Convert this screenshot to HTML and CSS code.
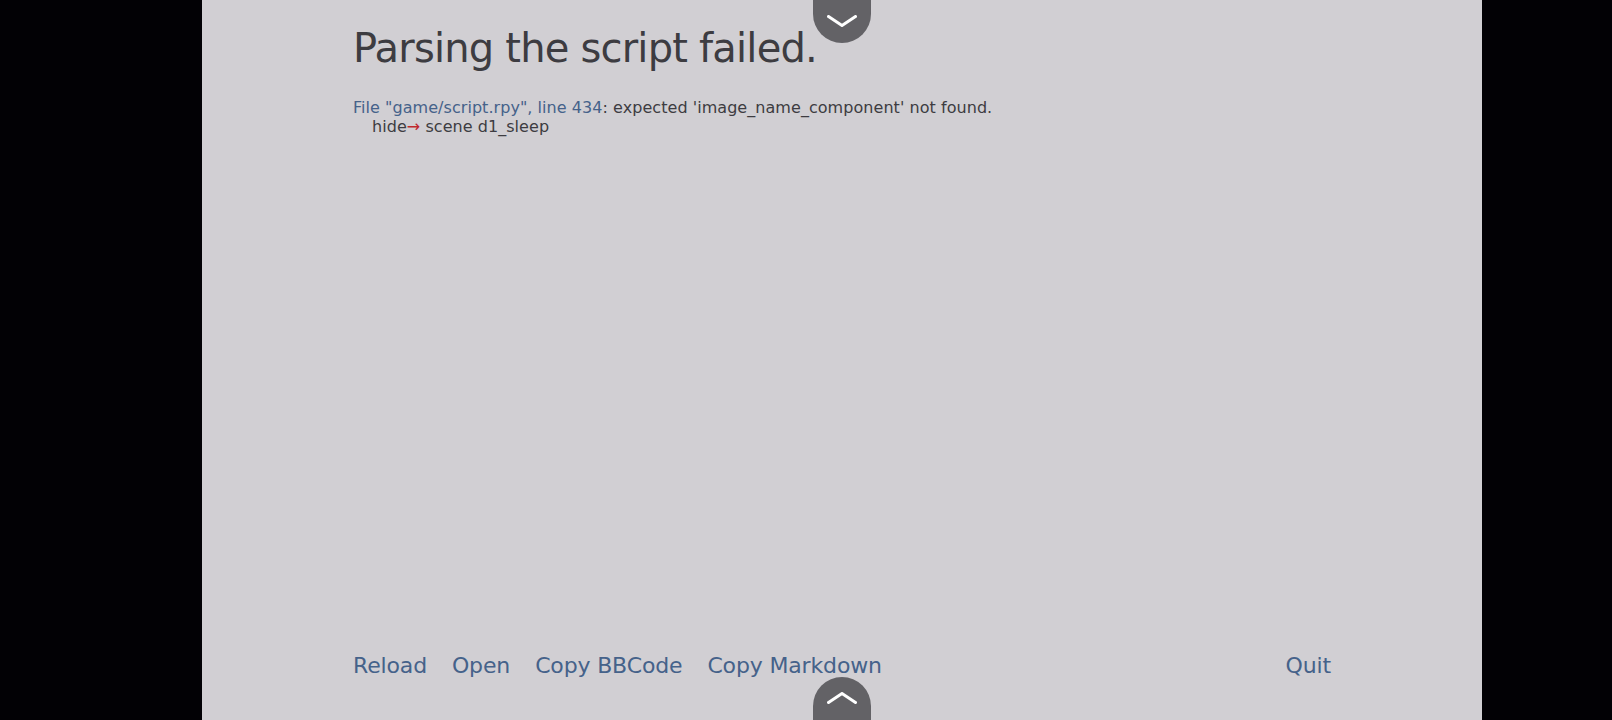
FILE: index.html
```html
<!DOCTYPE html>
<html lang="en">
  <head>
    <meta charset="utf-8" />
    <meta name="viewport" content="width=device-width, initial-scale=1" />
    <link rel="stylesheet" href="styles.css">
    <title>Parsing the script failed.</title>
  </head>
  <body>
    <main class="stage">
      <a class="scroll-tab scroll-tab--top" href="#">
        <svg viewBox="0 0 30 12" width="30" height="12">
          <polyline points="1.5,1.5 15,10.5 28.5,1.5" />
        </svg>
      </a>

      <section class="report">
        <h1>Parsing the script failed.</h1>
        <div class="trace">
          <p><span class="loc">File "game/script.rpy", line 434</span><span>: expected 'image_name_component' not found.</span></p>
          <p class="code"><span>hide</span><span class="mark">→</span><span>&nbsp;scene d1_sleep</span></p>
        </div>
      </section>

      <nav class="actions">
        <a href="#">Reload</a>
        <a href="#">Open</a>
        <a href="#">Copy BBCode</a>
        <a href="#">Copy Markdown</a>
        <a class="quit" href="#">Quit</a>
      </nav>

      <a class="scroll-tab scroll-tab--bottom" href="#">
        <svg viewBox="0 0 30 12" width="30" height="12">
          <polyline points="1.5,10.5 15,1.5 28.5,10.5" />
        </svg>
      </a>
    </main>
  </body>
</html>
```

FILE: styles.css
```css
:root {
  --panel-bg: #d1cfd3;
  --ink: #3d3c41;
  --link: #45628a;
  --tab: #636266;
  --accent: #c0282d;
}

* {
  box-sizing: border-box;
}

html {
  font-family: "DejaVu Sans", Verdana, sans-serif;
}

body {
  margin: 0;
  background-color: #020105;
  height: 100vh;
  overflow: hidden;
}

.stage {
  position: relative;
  width: 1280px;
  height: 720px;
  margin-left: 202px;
  background-color: var(--panel-bg);
  padding: 0 151px;
  display: flex;
  flex-direction: column;
}

.scroll-tab {
  position: absolute;
  left: 611px;
  width: 58px;
  height: 43px;
  background-color: var(--tab);
  display: flex;
  justify-content: center;

  & svg {
    fill: none;
    stroke: #fff;
    stroke-width: 3;
    stroke-linecap: round;
    stroke-linejoin: round;
  }
}

.scroll-tab--top {
  top: 0;
  border-radius: 0 0 29px 29px;
  padding-top: 15px;
}

.scroll-tab--bottom {
  bottom: 0;
  border-radius: 29px 29px 0 0;
  padding-top: 15px;
}

.report {
  padding-top: 24px;

  & h1 {
    margin: 0;
    font-size: 40px;
    font-weight: normal;
    line-height: 48px;
    letter-spacing: -0.8px;
    color: var(--ink);
  }
}

.trace {
  margin-top: 26px;
  font-size: 16px;
  line-height: 19px;
  letter-spacing: 0.05px;
  color: var(--ink);

  & p {
    margin: 0;
    white-space: nowrap;
  }

  & .code {
    padding-left: 19px;
  }

  & .loc {
    color: var(--link);
  }

  & .mark {
    color: var(--accent);
  }
}

.actions {
  margin-top: auto;
  padding-bottom: 41px;
  display: flex;
  gap: 25px;
  font-size: 22px;
  line-height: 26px;
  letter-spacing: -0.15px;

  & a {
    color: var(--link);
    text-decoration: none;
  }

  & .quit {
    margin-left: auto;
  }
}
```
